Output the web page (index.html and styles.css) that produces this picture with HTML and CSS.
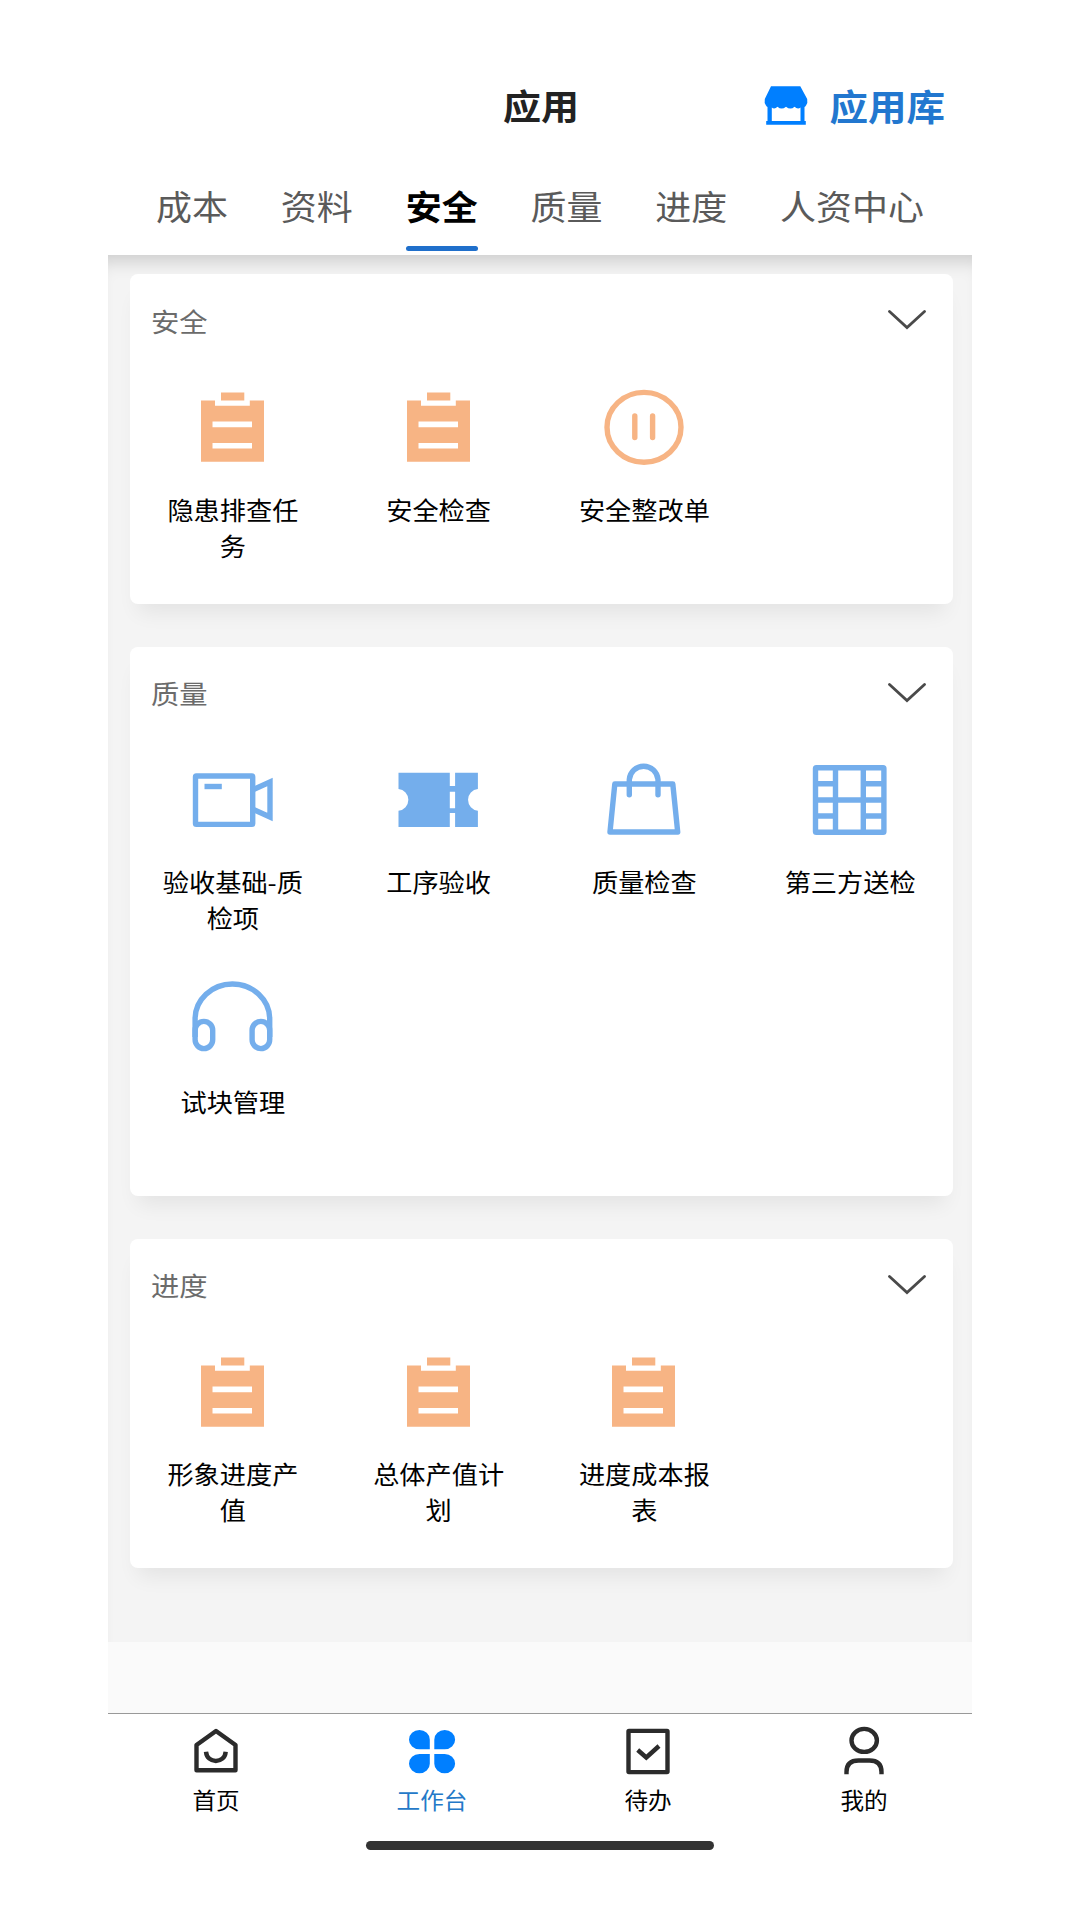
FILE: index.html
```html
<!DOCTYPE html>
<html lang="zh-CN">
<head>
  <meta charset="UTF-8">
  <meta name="viewport" content="width=device-width, initial-scale=1.0">
  <title>应用</title>
  <link rel="stylesheet" href="styles.css">
</head>
<body>

  <!-- Shared icons -->
  <svg class="sprite" width="0" height="0">
    <symbol id="icon-clipboard" viewBox="0 0 90 84">
      <path fill="currentColor" fill-rule="evenodd" d="M33 7.500h23.300v8H33zM13 15.500h14v5.200h34.800v-5.200h14.200v61.300H13zM24.500 36.500v5.800H64v-5.800zM24.500 58v5.500H64V58z"/>
    </symbol>
    <symbol id="icon-chevron" viewBox="0 0 40 20">
      <path d="M2.500 1.500L20 17.500L37.500 1.500" fill="none" stroke="currentColor" stroke-width="2.800" stroke-linecap="round"/>
    </symbol>
  </svg>

  <div class="phone">
    <header>
      <div class="title-bar">
        <h1><span class="text">应用</span></h1>
        <a class="library" href="#">
          <svg width="44" height="39" viewBox="0 0 44 39">
            <path fill="currentColor" d="M7 .2h29.300L43.200 13q.8 4-1.200 6.500-.7 1-1.500 1.500V35h1.300v3.800H2.200V35h1.300V21Q2.700 20.500 2 19.500 0 17 .8 13zM7.800 21.500V35h28.700V21.500q-2.800 2.200-6 -.8-4 3.800-8.500 0-4.500 3.800-8.500 0-3 3-5.700.8z"/>
          </svg>
          <span class="text">应用库</span>
        </a>
      </div>
      <nav class="tabs">
        <a href="#"><span class="text">成本</span></a>
        <a href="#"><span class="text">资料</span></a>
        <a href="#" class="active"><span class="text">安全</span></a>
        <a href="#"><span class="text">质量</span></a>
        <a href="#"><span class="text">进度</span></a>
        <a href="#"><span class="text">人资中心</span></a>
      </nav>
    </header>

    <main>
      <!-- Safety -->
      <section class="card orange">
        <div class="card-header">
          <h2><span class="text">安全</span></h2>
          <svg class="chevron"><use href="#icon-chevron"/></svg>
        </div>
        <div class="grid">
          <div class="item">
            <svg class="icon"><use href="#icon-clipboard"/></svg>
            <p class="text">隐患排查任务</p>
          </div>
          <div class="item">
            <svg class="icon"><use href="#icon-clipboard"/></svg>
            <p class="text">安全检查</p>
          </div>
          <div class="item">
            <svg class="icon line" viewBox="0 0 90 84">
              <ellipse cx="45" cy="42.300" rx="37" ry="34.900"/>
              <path d="M35.800 31v21.500M53.600 31v21.500" stroke-linecap="round"/>
            </svg>
            <p class="text">安全整改单</p>
          </div>
        </div>
      </section>

      <!-- Quality -->
      <section class="card blue">
        <div class="card-header">
          <h2><span class="text">质量</span></h2>
          <svg class="chevron"><use href="#icon-chevron"/></svg>
        </div>
        <div class="grid">
          <div class="item">
            <svg class="icon line" viewBox="0 0 90 84">
              <rect x="7.500" y="18" width="57.200" height="48.400" rx=".8"/>
              <path d="M16.500 28.500h17.300"/>
              <path d="M66 31.300L82 24v35L66 51.700"/>
            </svg>
            <p class="text">验收基础-质检项</p>
          </div>
          <div class="item">
            <svg class="icon" viewBox="0 0 90 84">
              <path fill="currentColor" d="M4.500 14.700h51.300V28h5.300V14.700h22.800V31a10.900 10.900 0 0 0 0 21.700V69H61.100V55h-5.300v14H4.500V52.700A10.900 10.900 0 0 0 4.500 31zM55.800 33.700v16.600h5.300V33.700z" fill-rule="evenodd"/>
            </svg>
            <p class="text">工序验收</p>
          </div>
          <div class="item">
            <svg class="icon line" viewBox="0 0 90 84">
              <path d="M15.800 26h58l4.900 48H11z" stroke-linejoin="round"/>
              <path d="M30.300 36.700V21.500a14.400 14.400 0 0 1 28.700 0v15.200" stroke-linecap="round"/>
            </svg>
            <p class="text">质量检查</p>
          </div>
          <div class="item">
            <svg class="icon line" viewBox="0 0 90 84">
              <rect x="10.500" y="9.700" width="68.400" height="64.600" rx=".8"/>
              <path d="M30.500 9.700v64.600M58.300 9.700v64.600M10.500 42h68.400M10.500 25.700h20M10.500 58h20M58.300 25.700H79M58.300 58H79"/>
            </svg>
            <p class="text">第三方送检</p>
          </div>
          <div class="item">
            <svg class="icon line" viewBox="0 0 90 84">
              <path d="M7.100 60V42a37.300 35 0 0 1 74.600 0v18"/>
              <rect x="7.100" y="44.400" width="17.600" height="27.200" rx="8.800"/>
              <rect x="64.100" y="44.400" width="17.600" height="27.200" rx="8.800"/>
            </svg>
            <p class="text">试块管理</p>
          </div>
        </div>
      </section>

      <!-- Progress -->
      <section class="card orange">
        <div class="card-header">
          <h2><span class="text">进度</span></h2>
          <svg class="chevron"><use href="#icon-chevron"/></svg>
        </div>
        <div class="grid">
          <div class="item">
            <svg class="icon"><use href="#icon-clipboard"/></svg>
            <p class="text">形象进度产值</p>
          </div>
          <div class="item">
            <svg class="icon"><use href="#icon-clipboard"/></svg>
            <p class="text">总体产值计划</p>
          </div>
          <div class="item">
            <svg class="icon"><use href="#icon-clipboard"/></svg>
            <p class="text">进度成本报表</p>
          </div>
        </div>
      </section>
    </main>

    <div class="spacer"></div>

    <footer>
      <nav class="tab-bar">
        <a href="#">
          <svg width="48" height="48" viewBox="0 0 48 48">
            <path d="M4.500 18L24 4l19.500 14v25.200h-39z" stroke-linejoin="round"/>
            <path d="M14 24.700c1 12.400 18.700 12.400 19.700 0"/>
          </svg>
          <span class="text">首页</span>
        </a>
        <a href="#" class="active">
          <svg width="48" height="48" viewBox="0 0 48 48">
            <path d="M21.800 22.300H11.400A10.400 9.650 0 1 1 21.800 12.650zM26.300 22.300V12.650A10.400 9.650 0 1 1 36.700 22.300zM21.800 27v9.650A10.400 9.650 0 1 1 11.400 27zM26.300 27h10.400a10.400 9.650 0 1 1-10.400 9.650z"/>
          </svg>
          <span class="text">工作台</span>
        </a>
        <a href="#">
          <svg width="48" height="48" viewBox="0 0 48 48">
            <rect x="4.500" y="3.900" width="39" height="41.200" rx=".5"/>
            <path d="M13.700 23l8.600 7.500L35 19"/>
          </svg>
          <span class="text">待办</span>
        </a>
        <a href="#">
          <svg width="48" height="48" viewBox="0 0 48 48">
            <ellipse cx="24.200" cy="13.400" rx="12.700" ry="11.500"/>
            <path d="M6.500 47.300V45q0-11.500 12-11.500h11q12 0 12 11.500v2.300"/>
          </svg>
          <span class="text">我的</span>
        </a>
      </nav>
      <div class="home-indicator"></div>
    </footer>
  </div>

</body>
</html>
```

FILE: styles.css
```css
* {
  box-sizing: border-box;
}

body {
  font-family: "Noto Sans CJK SC", "Noto Sans", sans-serif;
  margin: 0;
  background: #fff;
  color: #000;
}

a {
  color: inherit;
  text-decoration: none;
}

h1, h2, p {
  margin: 0;
}

.sprite {
  position: absolute;
}

.phone {
  display: flex;
  flex-direction: column;
  width: 864px;
  height: 1920px;
  margin: 0 auto;
}

/* slightly flattened type */
.text {
  display: block;
  transform: scaleY(0.94);
}

header {
  height: 255px;
  padding-top: 70px;
}

.title-bar {
  display: grid;
  grid-template-columns: 1fr auto 1fr;
  align-items: center;
  height: 70px;
  padding-right: 27px;
  padding-left: 29px;
}

h1 {
  grid-column: 2;
  font-size: 38px;
  line-height: 70px;
  color: #222;
}

.library {
  display: flex;
  align-items: center;
  justify-content: flex-end;
  gap: 21px;
  font-size: 38.500px;
  font-weight: bold;
  line-height: 70px;
  color: #2277cf;
}

.library svg {
  color: #007fff;
}

.tabs {
  display: flex;
  gap: 52.800px;
  height: 109px;
  padding: 39px 0 0 48px;
  font-size: 36px;
  line-height: 52px;
  color: #5a5a5a;
}

.tabs .active {
  font-weight: bold;
  color: #000;
}

.tabs .active::after {
  content: "";
  display: block;
  height: 5px;
  margin-top: 15px;
  border-radius: 3px;
  background: #1f6fcb;
}

main {
  display: flex;
  flex-direction: column;
  gap: 43px;
  height: 1387px;
  padding: 19px 19px 0 22px;
  overflow: hidden;
  background: #f4f4f4;
  box-shadow: inset 0 18px 18px -12px rgba(0, 0, 0, 0.17);
}

.card {
  padding-bottom: 14px;
  border-radius: 8px;
  background: #fff;
  box-shadow: 0 16px 20px -8px rgba(0, 0, 0, 0.07);
}

.card-header {
  display: flex;
  align-items: center;
  justify-content: space-between;
  height: 96px;
  padding: 0 26px 0 21px;
}

h2 {
  margin-bottom: 3px;
  font-size: 28.300px;
  font-weight: normal;
  line-height: 40px;
  color: #6b6b6b;
}

.chevron {
  width: 40px;
  height: 20px;
  margin-bottom: 4px;
  color: #4a4a4a;
}

.grid {
  display: grid;
  grid-template-columns: repeat(4, 1fr);
  grid-auto-rows: 219.500px;
}

.item {
  display: flex;
  flex-direction: column;
  align-items: center;
  padding-top: 15px;
}

.item p {
  width: 142px;
  margin-top: 22.500px;
  font-size: 26.200px;
  line-height: 38.300px;
  text-align: center;
  word-break: break-all;
  transform-origin: top;
}

.icon {
  width: 90px;
  height: 84px;
}

.icon.line {
  fill: none;
  stroke: currentColor;
  stroke-width: 5.400;
}

.orange .icon {
  color: #f7b484;
}

.blue .icon {
  color: #74aeec;
}

.spacer {
  height: 71px;
  background: #fafafa;
}

footer {
  flex: 1;
  border-top: 1px solid #999;
}

.tab-bar {
  display: grid;
  grid-template-columns: repeat(4, 1fr);
  height: 127px;
  padding-top: 13px;
}

.tab-bar a {
  display: flex;
  flex-direction: column;
  align-items: center;
  font-size: 23.600px;
  line-height: 32px;
}

.tab-bar svg {
  margin-bottom: 9px;
  overflow: visible;
  fill: none;
  stroke: #2b2b2b;
  stroke-width: 4.400;
}

.tab-bar .active {
  color: #2479c8;
}

.tab-bar .active svg {
  fill: #007fff;
  stroke: none;
}

.home-indicator {
  width: 348px;
  height: 9px;
  margin: 0 auto;
  border-radius: 5px;
  background: #333;
}
```
